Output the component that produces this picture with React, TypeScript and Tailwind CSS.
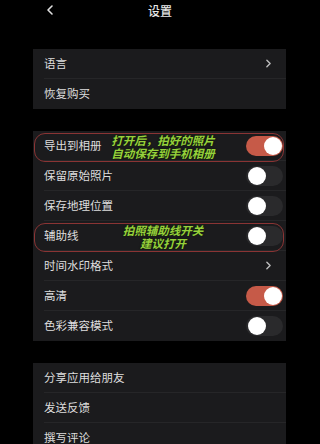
import { ChevronLeft, ChevronRight } from "lucide-react";

type Row = {
  label: string;
  kind: "chevron" | "on" | "off" | "none";
  note?: string[];
};

const groups: Row[][] = [
  [
    { label: "语言", kind: "chevron" },
    { label: "恢复购买", kind: "none" },
  ],
  [
    { label: "导出到相册", kind: "on", note: ["打开后，拍好的照片", "自动保存到手机相册"] },
    { label: "保留原始照片", kind: "off" },
    { label: "保存地理位置", kind: "off" },
    { label: "辅助线", kind: "off", note: ["拍照辅助线开关", "建议打开"] },
    { label: "时间水印格式", kind: "chevron" },
    { label: "高清", kind: "on" },
    { label: "色彩兼容模式", kind: "off" },
  ],
  [
    { label: "分享应用给朋友", kind: "none" },
    { label: "发送反馈", kind: "none" },
    { label: "撰写评论", kind: "none" },
  ],
];

function Toggle({ on }: { on: boolean }) {
  return (
    <div
      className={
        on
          ? "w-[37px] h-[20px] rounded-full bg-[#c65a48] flex items-center justify-end px-[1px]"
          : "w-[37px] h-[20px] rounded-full bg-[#2a2a2c] flex items-center justify-start px-[2px]"
      }
    >
      <div className="w-[18px] h-[18px] rounded-full bg-white" />
    </div>
  );
}

function SettingRow({ row, last }: { row: Row; last: boolean }) {
  return (
    <div className="relative h-[30px] pl-[11px]">
      <div
        className={
          last
            ? "h-full flex items-center pr-[3px]"
            : "h-full flex items-center pr-[3px] border-b border-[#262628]"
        }
      >
        <span className="flex-1 text-[11.5px] text-[#dedede]">{row.label}</span>
        {row.kind === "chevron" && (
          <ChevronRight size={13} strokeWidth={2.6} className="text-[#bdbdbd] mr-[8px]" />
        )}
        {row.kind === "on" && <Toggle on />}
        {row.kind === "off" && <Toggle on={false} />}
      </div>
      {row.note && (
        <>
          <div className="absolute left-[1px] right-[2px] top-[2px] bottom-[-1px] rounded-[11px] border-[1.5px] border-[#8a3434]" />
          <div className="absolute left-[70px] w-[120px] top-[1px] bottom-0 flex flex-col items-center justify-center leading-[13px] text-[11.5px] font-bold italic text-[#96d13c] [text-shadow:0_0_2px_#1a2a0a,0_0_1px_#000]">
            {row.note.map((t) => (
              <span key={t}>{t}</span>
            ))}
          </div>
        </>
      )}
    </div>
  );
}

export default function App() {
  return (
    <div
      className="w-[320px] h-[444px] bg-black overflow-hidden"
      style={{ fontFamily: '"Noto Sans CJK SC", "Noto Sans", sans-serif' }}
    >
      <div className="relative h-[22px] flex items-center justify-center">
        <ChevronLeft
          size={16}
          strokeWidth={2.4}
          className="absolute left-[42px] top-[2px] text-[#e0e0e0]"
        />
        <span className="text-[12px] text-[#e6e6e6] font-medium">设置</span>
      </div>
      <div className="flex flex-col gap-[22px] pt-[27px] pl-[33px]">
        {groups.map((g, gi) => (
          <div key={gi} className="w-[253px] bg-[#1b1b1d]">
            {g.map((row, ri) => (
              <SettingRow key={row.label} row={row} last={ri === g.length - 1} />
            ))}
          </div>
        ))}
      </div>
    </div>
  );
}
